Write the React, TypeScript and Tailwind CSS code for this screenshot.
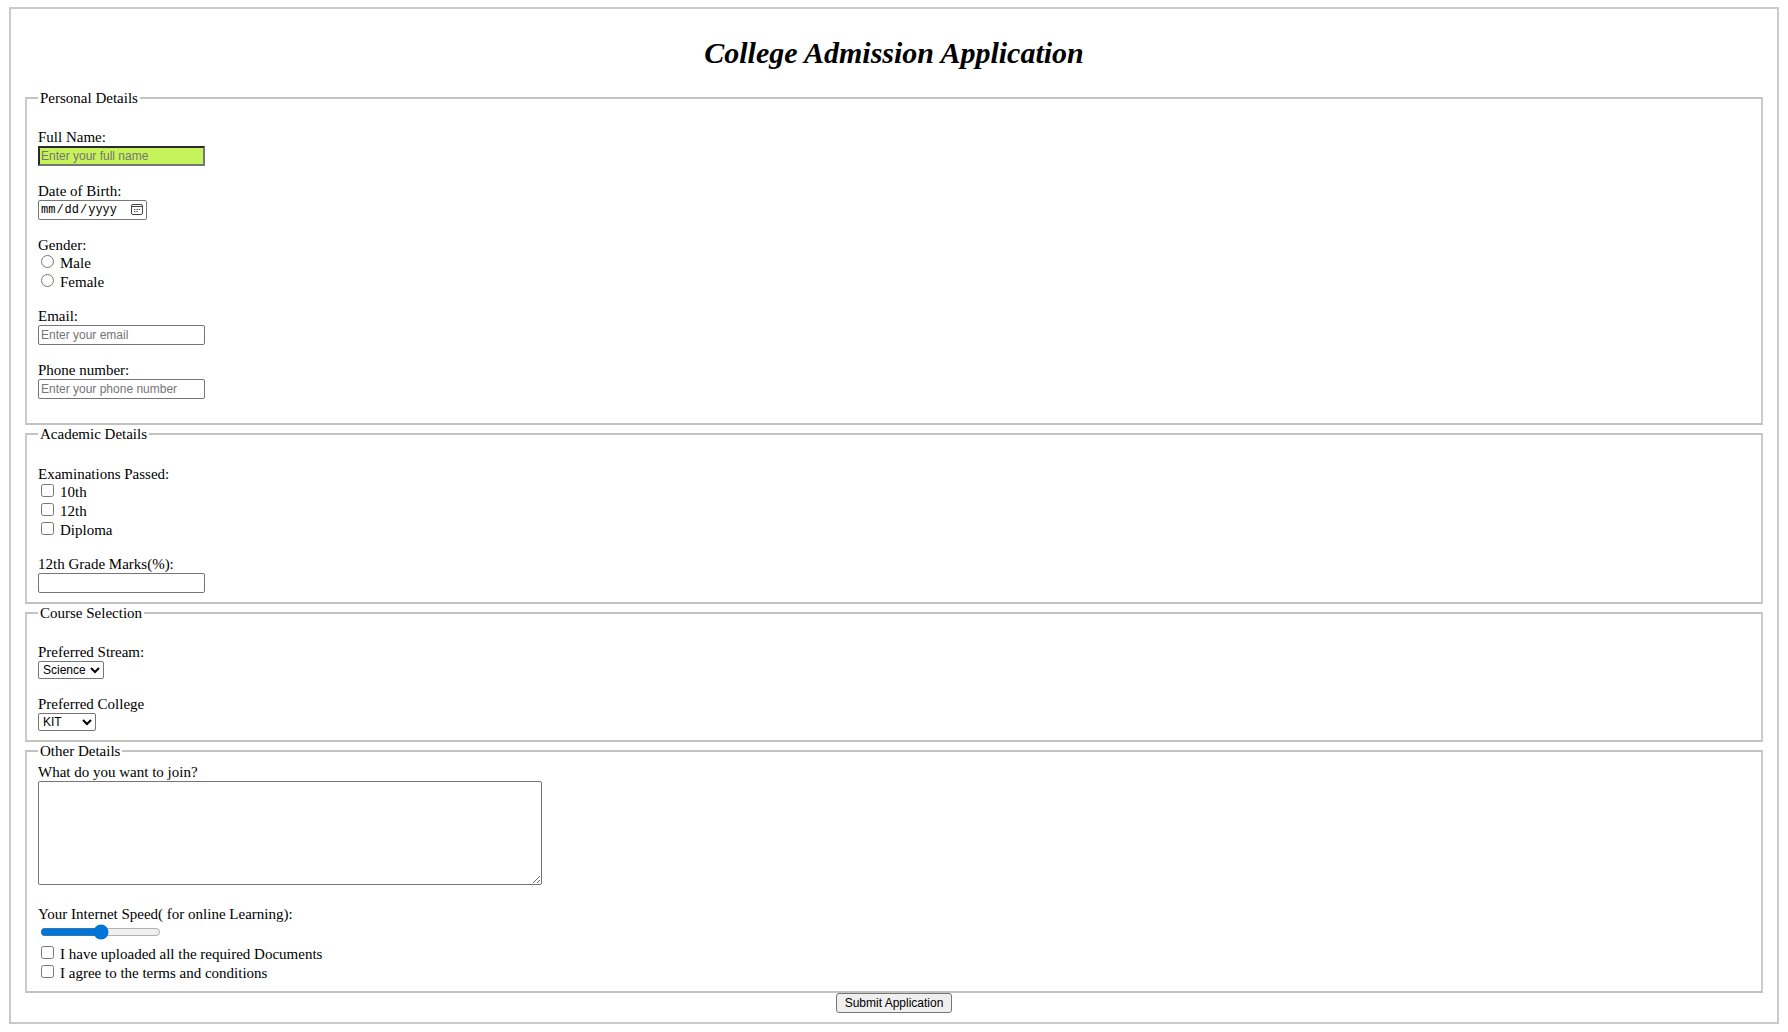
import React, { type ReactNode } from "react";

const textBox =
  "block h-5 w-[167px] rounded-[2px] border border-[#767676] bg-white px-[2px] font-['Liberation_Sans',sans-serif] text-[12px] leading-4 text-black placeholder:text-[#757575]";

const selectBox =
  "block h-[18px] rounded-[2px] border border-[#767676] bg-white font-['Liberation_Sans',sans-serif] text-[12px] leading-4 text-black";

function Section({ title, className, children }: { title: string; className: string; children: ReactNode }) {
  return (
    <fieldset className={`min-w-0 border-2 border-x-[#cbcbcb] border-y-[#c2c2c2] px-[11px] ${className}`}>
      <legend className="px-[2px]">{title}</legend>
      {children}
    </fieldset>
  );
}

function Field({ id, label, children }: { id: string; label: string; children: ReactNode }) {
  return (
    <div>
      <label htmlFor={id} className="block w-fit">
        {label}
      </label>
      {children}
    </div>
  );
}

function Choice({ type, name, label }: { type: "radio" | "checkbox"; name: string; label: string }) {
  return (
    <label className="flex w-fit items-start gap-[6px] pl-[3px]">
      <input type={type} name={name} className="mt-px size-[13px]" />
      {label}
    </label>
  );
}

function CalendarIcon() {
  return (
    <svg
      viewBox="0 0 12 12"
      className="pointer-events-none absolute top-1 right-1 size-3"
      fill="none"
      stroke="#444"
      aria-hidden="true"
    >
      <rect x="0.5" y="0.5" width="11" height="10" rx="1.5" />
      <path d="M0.5 2.5h11" />
      <path d="M3 5.5h1.4M5.4 5.5h1.4M7.8 5.5h1.4M3 7.5h1.4M5.4 7.5h1.4" />
    </svg>
  );
}

export default function App() {
  return (
    <div className="bg-white px-[9px] pt-[7px] pb-2 font-['Liberation_Serif',serif] text-[15px] leading-[18px] text-black">
      <form
        className="border-2 border-[#c9c9c9] px-[14px] pb-[9px]"
        onSubmit={(e) => e.preventDefault()}
      >
        <h1 className="pt-[26px] pb-[18px] text-center text-[30px] leading-9 font-bold italic">
          College Admission Application
        </h1>

        <Section title="Personal Details" className="flex flex-col gap-4 pt-[21px] pb-6">
          <Field id="full-name" label="Full Name:">
            <input
              id="full-name"
              type="text"
              placeholder="Enter your full name"
              className="block h-5 w-[167px] border-2 border-[#767676] border-t-[#2b2b2b] border-l-[#2b2b2b] bg-[#c6f25a] px-px font-['Liberation_Sans',sans-serif] text-[12px] leading-4 placeholder:text-[#757575]"
            />
          </Field>
          <Field id="birth-date" label="Date of Birth:">
            <div className="relative w-[109px]">
              <input
                id="birth-date"
                type="date"
                className="block h-5 w-full rounded-[2px] border border-[#767676] bg-white px-px font-['Liberation_Mono',monospace] text-[12px] leading-4 [&::-webkit-calendar-picker-indicator]:opacity-0"
              />
              <CalendarIcon />
            </div>
          </Field>
          <div role="radiogroup" aria-label="Gender">
            <div>Gender:</div>
            <div className="flex flex-col gap-px">
              <Choice type="radio" name="gender" label="Male" />
              <Choice type="radio" name="gender" label="Female" />
            </div>
          </div>
          <Field id="email" label="Email:">
            <input id="email" type="email" placeholder="Enter your email" className={textBox} />
          </Field>
          <Field id="phone" label="Phone number:">
            <input id="phone" type="tel" placeholder="Enter your phone number" className={textBox} />
          </Field>
        </Section>

        <Section title="Academic Details" className="flex flex-col gap-4 pt-[22px] pb-[9px]">
          <div role="group" aria-label="Examinations Passed">
            <div>Examinations Passed:</div>
            <div className="flex flex-col gap-px">
              <Choice type="checkbox" name="exam-10" label="10th" />
              <Choice type="checkbox" name="exam-12" label="12th" />
              <Choice type="checkbox" name="exam-diploma" label="Diploma" />
            </div>
          </div>
          <Field id="marks" label="12th Grade Marks(%):">
            <input id="marks" type="text" className={textBox} />
          </Field>
        </Section>

        <Section title="Course Selection" className="flex flex-col gap-4 pt-[21px] pb-[9px]">
          <Field id="stream" label="Preferred Stream:">
            <select id="stream" className={`w-[66px] ${selectBox}`}>
              <option>Science</option>
            </select>
          </Field>
          <Field id="college" label="Preferred College">
            <select id="college" className={`w-[58px] ${selectBox}`}>
              <option>KIT</option>
            </select>
          </Field>
        </Section>

        <Section title="Other Details" className="pt-[3px] pb-[9px]">
          <Field id="join" label="What do you want to join?">
            <textarea
              id="join"
              className="block h-[104px] w-[504px] rounded-[2px] border border-[#767676] bg-white p-[2px] font-mono text-[13px]"
            />
          </Field>
          <div className="mt-5">
            <Field id="speed" label="Your Internet Speed( for online Learning):">
              <input
                id="speed"
                type="range"
                defaultValue={50}
                className="mx-[2px] mt-px mb-1 block h-4 w-[121px] accent-[#0075d9]"
              />
            </Field>
          </div>
          <div className="flex flex-col gap-px pt-px">
            <Choice type="checkbox" name="documents" label="I have uploaded all the required Documents" />
            <Choice type="checkbox" name="terms" label="I agree to the terms and conditions" />
          </div>
        </Section>

        <button
          type="submit"
          className="mx-auto block h-5 rounded-[3px] border border-[#767676] bg-[#efefef] px-2 font-['Liberation_Sans',sans-serif] text-[12px] leading-4"
        >
          Submit Application
        </button>
      </form>
    </div>
  );
}
